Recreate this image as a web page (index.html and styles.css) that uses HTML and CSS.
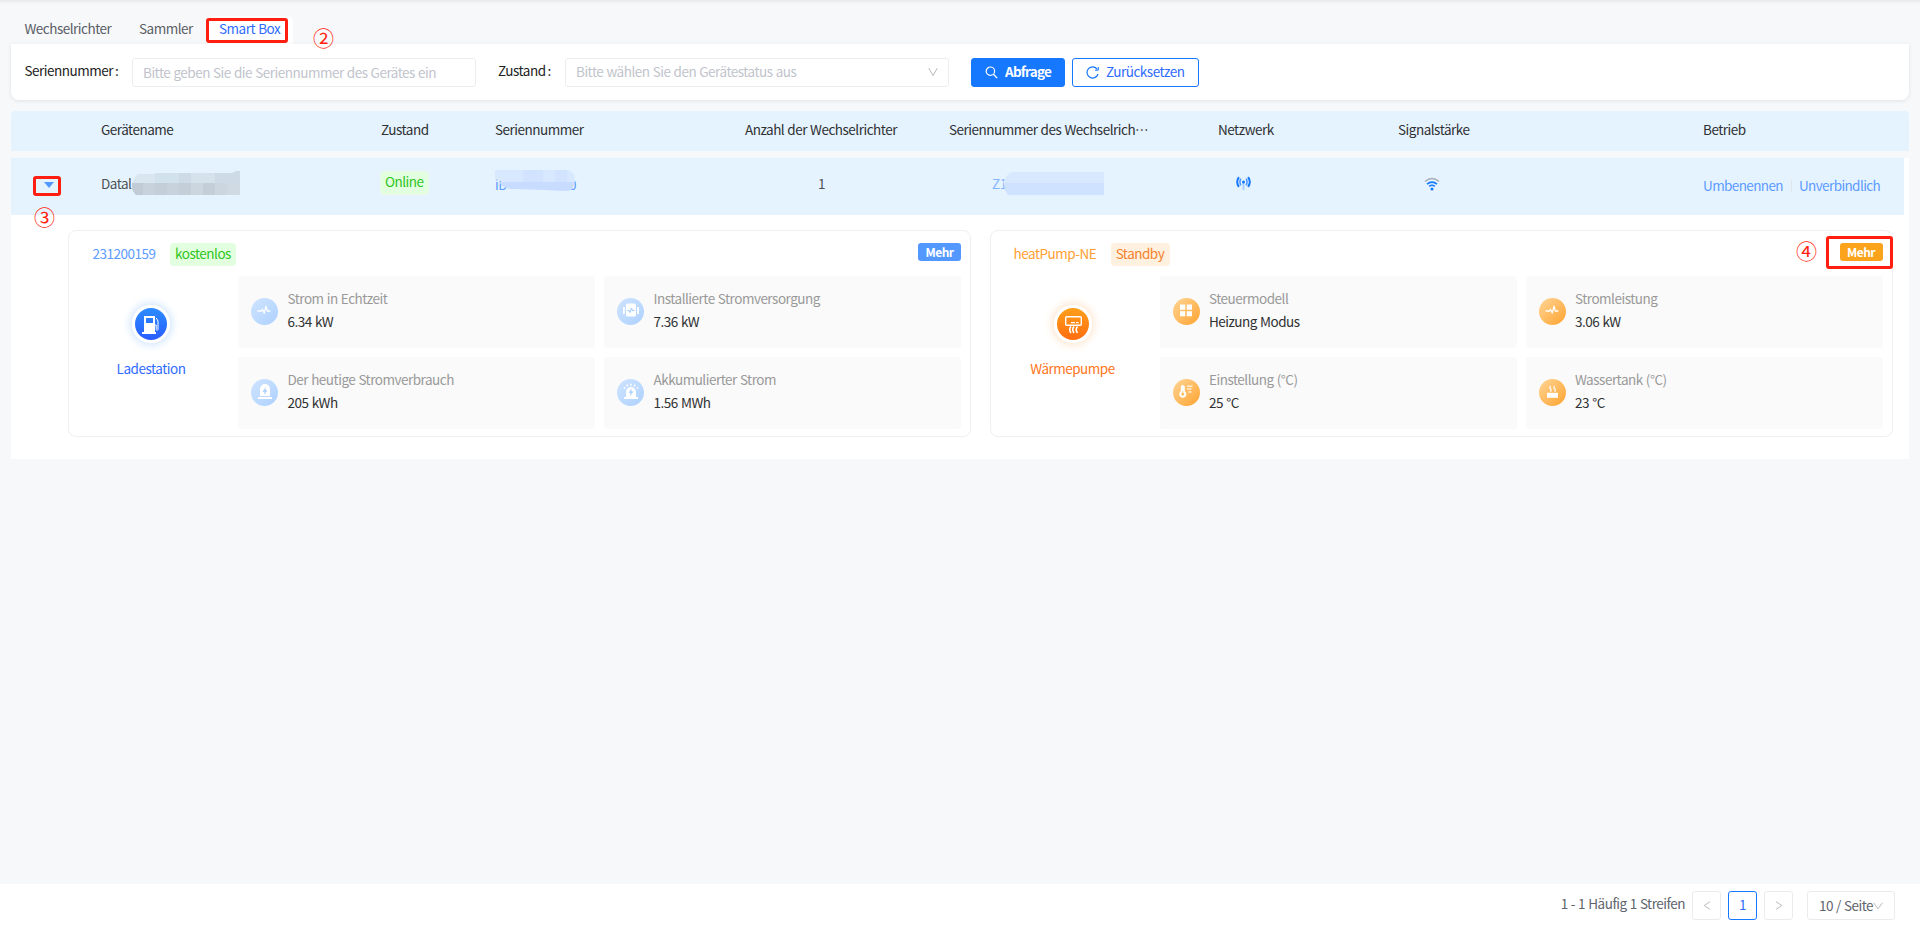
FILE: index.html
```html
<!DOCTYPE html>
<html lang="de">
<head>
<meta charset="utf-8">
<title>Smart Box</title>
<link rel="stylesheet" href="styles.css">
</head>
<body>
<svg class="defs" width="0" height="0">
  <defs>
    <linearGradient id="blueSoft" x1="0" y1="0" x2="1" y2="1"><stop offset="0" stop-color="#cfe4ff"/><stop offset="1" stop-color="#aed1ff"/></linearGradient>
    <linearGradient id="orangeSoft" x1="0" y1="0" x2="1" y2="1"><stop offset="0" stop-color="#ffd596"/><stop offset="1" stop-color="#ffa32f"/></linearGradient>
    <linearGradient id="blueMain" x1="0" y1="0" x2="0" y2="1"><stop offset="0" stop-color="#2b8cff"/><stop offset="1" stop-color="#2a5cff"/></linearGradient>
    <linearGradient id="orangeMain" x1="0" y1="0" x2="0" y2="1"><stop offset="0" stop-color="#ff9f1a"/><stop offset="1" stop-color="#ff6d0f"/></linearGradient>
    <symbol id="pulse" viewBox="0 0 27 27"><path d="M6.5 13h4l1-1.7 1.7 3.8 1.8-7 1.3 4.9h3" fill="none" stroke="#fff" stroke-width="1.3" stroke-linejoin="round"/></symbol>
  </defs>
</svg>

<nav class="tabs">
  <span class="tab tab-inverter">Wechselrichter</span>
  <span class="tab tab-collector">Sammler</span>
  <span class="tab tab-active">Smart Box</span>
</nav>

<section class="filters">
  <label class="filter-label">Seriennummer<i>:</i></label>
  <div class="field field-serial">Bitte geben Sie die Seriennummer des Gerätes ein</div>
  <label class="filter-label label-state">Zustand<i>:</i></label>
  <div class="field field-state"><span>Bitte wählen Sie den Gerätestatus aus</span>
    <svg width="10" height="10" viewBox="0 0 10 10"><path d="M.8 1.2 5 8.6l4.2-7.4" fill="none" stroke="#b8b8b8"/></svg></div>
  <div class="btn btn-primary"><svg width="13" height="13" viewBox="0 0 13 13"><circle cx="5.4" cy="5.2" r="4.2" fill="none" stroke="#fff" stroke-width="1.2"/><path d="m8.4 8.3 3.8 3.8" stroke="#fff" stroke-width="1.3"/></svg>Abfrage</div>
  <div class="btn btn-ghost"><svg width="13" height="13" viewBox="0 0 13 13"><path d="M11.3 3.3A5.6 5.6 0 1 0 12 8" fill="none" stroke="#1677ff" stroke-width="1.2"/><path d="M12.3 1v3.2H9" fill="none" stroke="#1677ff"/></svg>Zurücksetzen</div>
</section>

<section class="table">
  <div class="row head">
    <span></span><span>Gerätename</span><span>Zustand</span><span>Seriennummer</span><span>Anzahl der Wechselrichter</span><span>Seriennummer des Wechselrich<span lang="zh-CN">…</span></span><span>Netzwerk</span><span>Signalstärke</span><span>Betrieb</span>
  </div>
  <div class="gap"></div>
  <div class="row item">
    <span class="expander"><i class="caret"></i></span>
    <span class="device">Datal<svg class="mosaic mosaic-name" width="110" height="24" viewBox="0 0 110 24"><path fill="#d9e6ef" d="M7 3h17v10H1q2-7 6-10z"/><path fill="#d2e2ed" d="M24 2h24v11H24z"/><path fill="#ccdbe6" d="M48 2h12v11H48zM84 2h17l4-2h4v13H84z"/><path fill="#d5e2ec" d="M60 2h24v11H60z"/><path fill="#c0cbd5" d="M1 12h11v12H5q-4-4-4-7z"/><path fill="#c8d2dc" d="M12 12h12v12H12zM36 12h12v12H36z"/><path fill="#c3ced8" d="M24 12h12v12H24zM48 12h12v12H48zM72 12h12v12H72z"/><path fill="#cbd6df" d="M60 12h12v12H60zM84 12h12v12H84z"/><path fill="#d0dae3" d="M96 12h13v12H96z"/></svg></span>
    <span><b class="tag tag-green tag-online">Online</b></span>
    <span class="link serial">iD<svg class="mosaic mosaic-serial" width="82" height="27" viewBox="0 0 82 27"><path fill="#d8e9ff" d="M0 0h72q8 1 8 12H8L0 9z"/><path fill="#d2e3ff" d="M28 0h20v12H28zM60 0h12v12H60z"/><path fill="#c8dcff" d="M4 12h75q0 10-9 9l-21-1-28-1q-12 1-17-7z"/></svg><em>0</em></span>
    <span class="count">1</span>
    <span class="link inverter">Z1<svg class="mosaic mosaic-inv" width="102" height="23" viewBox="0 0 102 23"><path fill="#d7e8ff" d="M9 0h92v11H0q3-9 9-11z"/><path fill="#cfe2ff" d="M1 11h100v12H5q-4-5-4-12z"/></svg></span>
    <span class="net"><svg width="15" height="16" viewBox="0 0 15 16"><path d="M7.5 6v8" stroke="#a9d0ff" stroke-width="2"/><circle cx="7.5" cy="6" r="1.5" fill="#1677ff"/><path d="M4.800 2.700q-1.800 3.300 0 6.600M10.200 2.700q1.800 3.300 0 6.600" fill="none" stroke="#4d98ff" stroke-width="1.5"/><path d="M2.900 1.200q-3.400 4.800 0 9.600M12.100 1.200q3.400 4.800 0 9.600" fill="none" stroke="#1677ff" stroke-width="2"/></svg></span>
    <span class="signal"><svg width="16" height="14" viewBox="0 0 16 14"><path d="M1 4.5q7-6 14 0" fill="none" stroke="#a5aeb8" stroke-width="1.6"/><path d="M3 7.2q5-4.2 10 0M5.2 9.4q2.8-2.2 5.6 0" fill="none" stroke="#1677ff" stroke-width="1.6"/><circle cx="8" cy="12" r="1.5" fill="#1677ff"/></svg></span>
    <span class="link ops"><a>Umbenennen</a><i></i><a>Unverbindlich</a></span>
  </div>

  <div class="detail">
    <article class="card blue">
      <header><span class="card-id">231200159</span><b class="tag tag-green">kostenlos</b><b class="more">Mehr</b></header>
      <div class="card-body">
        <div class="kind">
          <div class="halo"><svg width="32" height="32" viewBox="0 0 32 32"><circle cx="16" cy="16" r="16" fill="url(#blueMain)"/><path fill="#fff" fill-rule="evenodd" d="M9 8h11v16h1v2H7v-2h2zm2 2v5h7v-5z"/><path d="M20 17h1.2v4.5q.8 2 1.8 0V13l-1.8-3" fill="none" stroke="#fff"/></svg></div>
          <span>Ladestation</span>
        </div>
        <div class="tiles">
          <div class="tile"><svg width="27" height="27" viewBox="0 0 27 27"><circle cx="13.5" cy="13.5" r="13.5" fill="url(#blueSoft)"/><use href="#pulse" width="27" height="27"/></svg><p>Strom in Echtzeit<strong>6.34 kW</strong></p></div>
          <div class="tile"><svg width="27" height="27" viewBox="0 0 27 27"><circle cx="13.5" cy="13.5" r="13.5" fill="url(#blueSoft)"/><rect x="9" y="5.5" width="10" height="13" rx="1.5" fill="#fff"/><path d="M6.9 9v7M21.1 9v7" stroke="#fff" stroke-width="1.8"/><path d="M10.500 12.500h1.500l1 2 1.500-4.500 1 2.500h2" fill="none" stroke="#9cc8ff"/></svg><p>Installierte Stromversorgung<strong>7.36 kW</strong></p></div>
          <div class="tile"><svg width="27" height="27" viewBox="0 0 27 27"><circle cx="13.5" cy="13.5" r="13.5" fill="url(#blueSoft)"/><path fill="#fff" d="M9 17V10a5 5 0 0 1 10 0v7zM7 18h14v2H7z"/><path fill="#a9cfff" d="m14.8 8-3.4 4.7h2.2l-.6 3.4 3.6-4.8h-2.3z"/></svg><p>Der heutige Stromverbrauch<strong>205 kWh</strong></p></div>
          <div class="tile"><svg width="27" height="27" viewBox="0 0 27 27"><circle cx="13.5" cy="13.5" r="13.5" fill="url(#blueSoft)"/><path fill="#fff" d="M9 18v-5a5 5 0 0 1 10 0v5h2v2H7v-2z"/><path fill="#a9cfff" d="m14.8 9.5-3.2 4.3h2l-.6 3.2 3.5-4.5h-2.1z"/><path d="M14 4.8v2M9.8 5.6l.9 1.7M18.2 5.6l-.9 1.7M6.8 8.4l1.5 1.1M21.2 8.4l-1.5 1.1" stroke="#fff" stroke-width="1.5"/></svg><p>Akkumulierter Strom<strong>1.56 MWh</strong></p></div>
        </div>
      </div>
    </article>
    <article class="card orange">
      <header><span class="card-id">heatPump-NE</span><b class="tag tag-orange">Standby</b><b class="more">Mehr</b></header>
      <div class="card-body">
        <div class="kind">
          <div class="halo"><svg width="32" height="32" viewBox="0 0 32 32"><circle cx="16" cy="16" r="16" fill="url(#orangeMain)"/><rect x="8.7" y="8.7" width="15.6" height="8.6" rx="1" fill="none" stroke="#fff" stroke-width="1.4"/><path d="M14 14.7h4M19 14.7h2.5" stroke="#fff" stroke-width="1.2"/><path d="M14 18.5q-2.6 3.2 0 6.500M17 18.500q-2.600 3.200 0 6.500M20.500 18.500q-2.600 3.200 0 6.500" fill="none" stroke="#fff" stroke-width="1.6"/></svg></div>
          <span>Wärmepumpe</span>
        </div>
        <div class="tiles">
          <div class="tile"><svg width="27" height="27" viewBox="0 0 27 27"><circle cx="13.5" cy="13.5" r="13.5" fill="url(#orangeSoft)"/><path fill="#fff" d="M7 6.500h5.200v5.200H7zM13.800 6.500H19v5.200h-5.200zM7 13.300h5.200v5H7zM13.800 13.300H19v5h-5.200z"/></svg><p>Steuermodell<strong>Heizung Modus</strong></p></div>
          <div class="tile"><svg width="27" height="27" viewBox="0 0 27 27"><circle cx="13.5" cy="13.5" r="13.5" fill="url(#orangeSoft)"/><use href="#pulse" width="27" height="27"/></svg><p>Stromleistung<strong>3.06 kW</strong></p></div>
          <div class="tile"><svg width="27" height="27" viewBox="0 0 27 27"><circle cx="13.5" cy="13.5" r="13.5" fill="url(#orangeSoft)"/><path fill="#fff" fill-rule="evenodd" d="M7.8 12.2V8a2 2 0 0 1 4 0v4.2a3.6 3.6 0 1 1-4 0zm1.5 0v1.5a1.5 1.5 0 1 0 1 0v-1.5z"/><path d="M14 7.2h5.5M14 10h4.5M15.5 13h3" stroke="#fff" stroke-opacity=".75" stroke-width="1.5"/></svg><p>Einstellung (°C)<strong>25 °C</strong></p></div>
          <div class="tile"><svg width="27" height="27" viewBox="0 0 27 27"><circle cx="13.5" cy="13.5" r="13.5" fill="url(#orangeSoft)"/><path fill="#fff" d="M8 13.8h11v5H8z"/><path d="M11.5 7q-1.5 1.4 0 2.8t-.2 2.8M15.7 7q-1.5 1.4 0 2.8t-.2 2.8" fill="none" stroke="#fff" stroke-width="1.2"/></svg><p>Wassertank (°C)<strong>23 °C</strong></p></div>
        </div>
      </div>
    </article>
  </div>
</section>

<footer class="pager">
  <span class="total">1 - 1 Häufig 1 Streifen</span>
  <div class="page"><svg width="8" height="9" viewBox="0 0 8 9"><path d="M7 .7 1.2 4.5 7 8.3" fill="none" stroke="#bbb"/></svg></div>
  <div class="page page-current">1</div>
  <div class="page"><svg width="8" height="9" viewBox="0 0 8 9"><path d="M1 .7l5.8 3.8L1 8.3" fill="none" stroke="#bbb"/></svg></div>
  <div class="page page-size">10 / Seite<svg width="10" height="8" viewBox="0 0 10 8"><path d="M.5.7 5 6.8 9.5.7" fill="none" stroke="#bbb"/></svg></div>
</footer>

<div class="mark mark-tab"></div>
<div class="mark mark-caret"></div>
<div class="mark mark-more"></div>
<span class="num num-2">②</span>
<span class="num num-3">③</span>
<span class="num num-4">④</span>
</body>
</html>
```
FILE: styles.css
```css
* { box-sizing: border-box; }
body {
  margin: 0;
  height: 927px;
  padding: 16px 11px 0;
  display: flex;
  flex-direction: column;
  position: relative;
  overflow: hidden;
  background: #f7f8fa linear-gradient(#e8eaec, #f7f8fa) 0 0 / 100% 4px no-repeat;
  font: 13.5px/20px "Noto Sans CJK SC", "Noto Sans", sans-serif;
  letter-spacing: -.49px;
  word-spacing: .6px;
  color: #303133;
}
i, em { font-style: normal; }
svg { display: block; flex: none; }
.defs { position: absolute; }

.tabs { display: flex; height: 28px; padding-left: 13.5px; color: #5a5e66; }
.tab { padding-top: 2px; white-space: nowrap; }
.tab-inverter { width: 114.5px; }
.tab-collector { width: 67px; }
.tab-active { width: 87px; padding-left: 13px; background: #fff; border-radius: 6px 6px 0 0; color: #2f6bff; }

.filters {
  display: flex;
  height: 56px;
  width: 1898px;
  padding: 14px 0 0 13.5px;
  background: #fff;
  border-radius: 0 0 8px 8px;
  box-shadow: 0 1px 4px rgba(0, 0, 0, .09);
}
.filter-label { width: 107.5px; padding-top: 2px; color: #222; white-space: nowrap; }
.filter-label i { margin-left: 2px; }
.label-state { width: 67px; margin-left: 22px; }
.field {
  display: flex;
  justify-content: space-between;
  height: 29px;
  border: 1px solid #ebedf0;
  border-radius: 3px;
  padding: 3px 10px;
  color: #bfc4cc;
  white-space: nowrap;
}
.field-serial { width: 344px; }
.field-state { width: 384px; padding-top: 2px; }
.field-state svg { margin-top: 6px; }
.btn {
  display: flex;
  gap: 7px;
  height: 29px;
  padding: 2px 0 0 13px;
  border: 1px solid #1677ff;
  border-radius: 3px;
}
.btn svg { margin-top: 5px; }
.btn-primary { width: 94px; margin: 0 7px 0 22px; background: #1677ff; color: #fff; font-weight: 700; letter-spacing: -.75px; }
.btn-ghost { width: 127px; color: #2f6bff; }

.table { width: 1898px; margin-top: 11px; background: #fff; height: 348px; }
.row {
  display: grid;
  grid-template-columns: 90px 280px 114px 250px 204px 269px 180px 305px 1fr;
  background: #e5f3ff;
  white-space: nowrap;
}
.head { height: 40px; padding-top: 8px; border-radius: 3px 3px 0 0; }
.gap { height: 7px; background: #f7f8fa; }
.item { width: 1893px; height: 57px; padding-top: 15px; color: #4d5157; position: relative; z-index: 0; }
.link { color: #5c9bff; }
.expander { padding: 9px 0 0 33px; }
.caret { display: block; width: 0; border: 5px solid transparent; border-top: 6px solid #5298ff; border-bottom: 0; }
.device, .serial, .inverter { position: relative; }
.mosaic { position: absolute; }
.mosaic-name { left: 30px; top: -2px; }
.mosaic-serial { left: 0; top: -3px; }
.mosaic-inv { left: 54px; top: -1px; }
.serial { padding-top: 1px; z-index: 0; }
.serial em { position: absolute; left: 74px; top: 1px; z-index: -1; }
.inverter { padding-left: 43px; color: #82b4ff; }
.tag { display: inline-block; height: 23px; padding: 0 5.4px 0 5px; border-radius: 4px; font-weight: 400; line-height: 20px; }
.tag-green { background: #e2ffdf; color: #2fc51d; }
.tag-online { height: 24px; margin: -2px 0 0 -1px; border: 1px solid #edf8e6; padding: 0 4.4px 0 4px; line-height: 19px; vertical-align: top; }
.tag-orange { background: #fff1df; color: #f5822d; }
.count { padding-left: 73px; }
.net { padding: 3px 0 0 18px; }
.signal { padding: 4px 0 0 26px; }
.ops { display: flex; padding-top: 2px; letter-spacing: -.6px; }
.ops i { width: 1px; height: 12px; margin: 5px 7px 0 8px; background: #e0e5ea; }

.detail { display: flex; gap: 18.5px; padding: 15px 0 0 57px; }
.card { width: 903px; height: 207px; padding: 12px 9px 0; border: 1px solid #efefef; border-radius: 8px; }
.card header { display: flex; height: 33px; }
.card-id { margin: 0 14.500px 0 14.500px; }
.blue .card-id { color: #5c9bff; }
.more { width: 43px; height: 18px; margin-left: auto; border-radius: 3px; background: #5298ff; color: #fff; font-size: 12px; font-weight: 700; line-height: 17px; text-align: center; }
.card-body { display: flex; }
.kind { width: 160px; padding: 29px 14px 0 0; text-align: center; color: #2f6bff; }
.halo { width: 38px; margin: 0 auto 15px; border: 3px solid #fff; border-radius: 50%; box-shadow: 0 0 8px 2px #cfe4ff; }
.tiles { display: grid; grid-template-columns: 357px 357px; grid-template-rows: 72px 72px; gap: 9px; }
.tile { display: flex; gap: 9.5px; padding: 11px 13px 0; background: #fafafa; border-radius: 3px; }
.tile svg { margin-top: 11px; }
.tile p { margin: 0; color: #999; line-height: 23px; white-space: nowrap; }
.tile strong { display: block; font-weight: 400; color: #303133; }
.orange .card-id { color: #ffa033; margin-left: 14px; }
.orange .more { background: #faa31b; }
.orange .kind { color: #ff7420; }
.orange .halo { box-shadow: 0 0 8px 2px #ffe4cc; }

.pager {
  display: flex;
  height: 43px;
  margin: auto -11px 0;
  padding: 7px 25px 0 0;
  justify-content: flex-end;
  background: #fff;
  color: #60646c;
}
.total { padding: 2px 7px 0 0; }
.page { display: flex; align-items: center; justify-content: center; width: 29px; height: 29px; margin-right: 7px; border: 1px solid #ebebeb; border-radius: 3px; }
.page-current { border-color: #1677ff; color: #2f6bff; padding-bottom: 4px; }
.page-size { width: 88px; margin: 0 0 0 7px; padding-bottom: 2px; }
.page-size svg { margin-top: 2px; }

.mark { position: absolute; border: 3px solid #ff1e10; border-radius: 3px; }
.mark-tab { left: 206px; top: 18px; width: 82px; height: 25px; }
.mark-caret { left: 33px; top: 176px; width: 28px; height: 20px; }
.mark-more { left: 1826px; top: 236px; width: 67px; height: 33px; }
.num { position: absolute; color: #ff1e10; font-size: 21px; line-height: 24px; }
.num-2 { left: 313px; top: 25px; }
.num-3 { left: 34px; top: 204px; }
.num-4 { left: 1796px; top: 238px; }
```
